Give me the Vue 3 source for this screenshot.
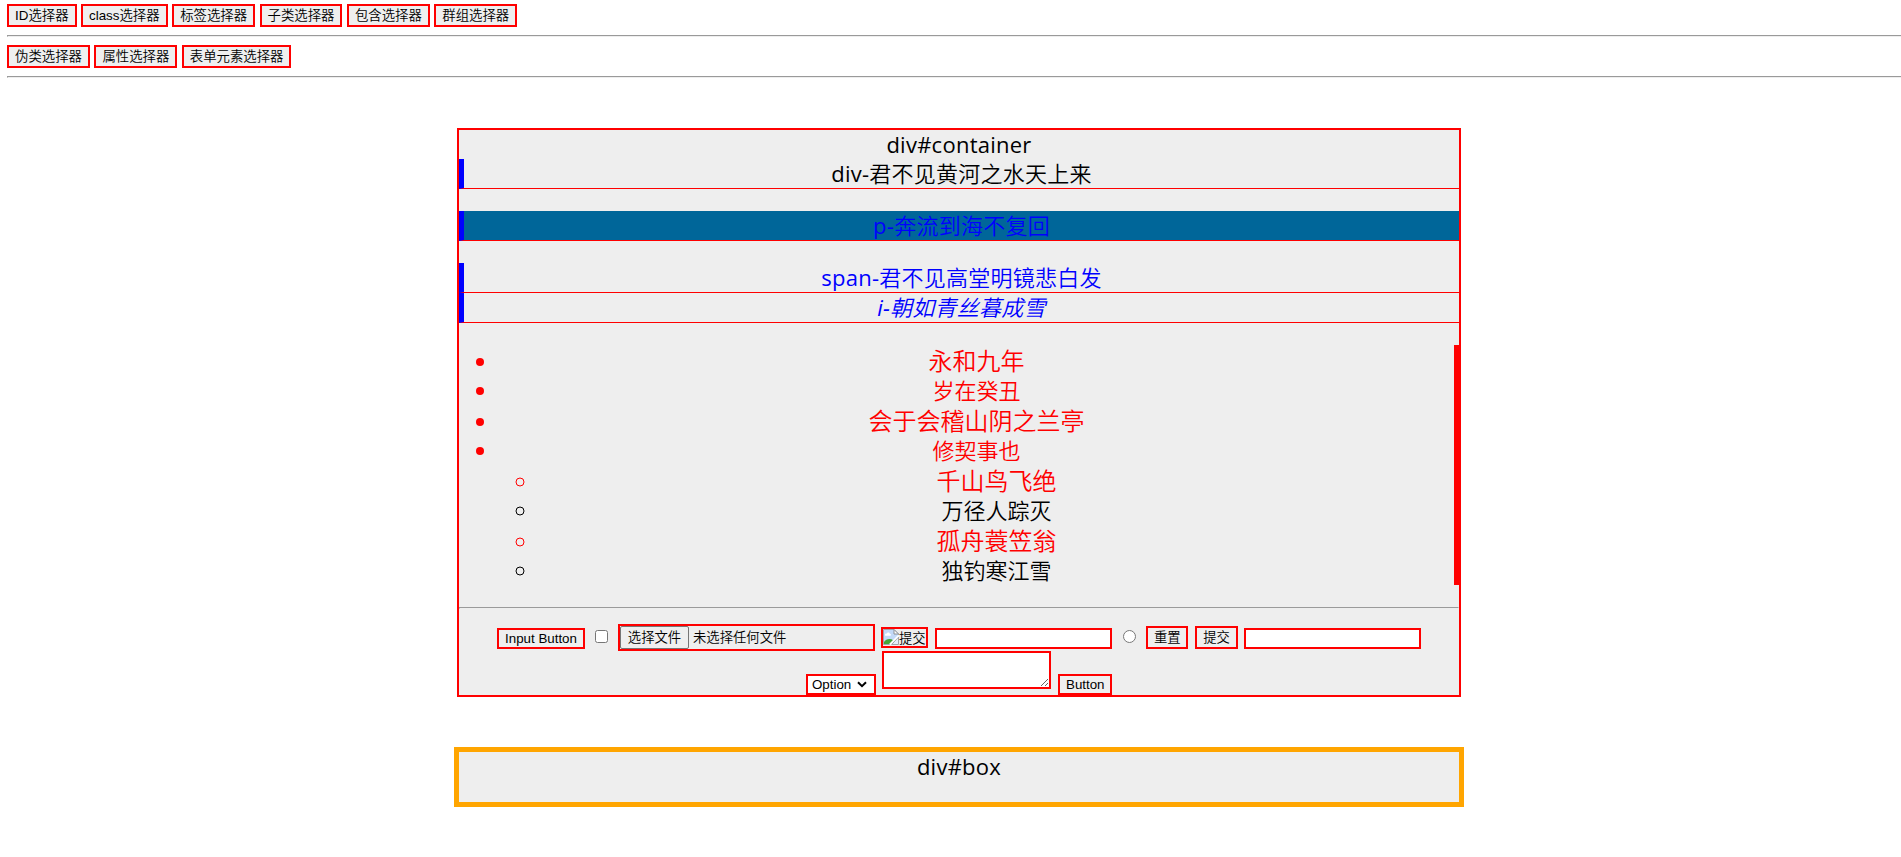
<script setup>
import { ref } from 'vue'

const basicButtons = ['ID选择器', 'class选择器', '标签选择器', '子类选择器', '包含选择器', '群组选择器']
const extraButtons = ['伪类选择器', '属性选择器', '表单元素选择器']

const outerItems = ['永和九年', '岁在癸丑', '会于会稽山阴之兰亭', '修契事也']
const innerItems = ['千山鸟飞绝', '万径人踪灭', '孤舟蓑笠翁', '独钓寒江雪']

const password = ref('')
const text = ref('')
const checked = ref(false)
const note = ref('')
</script>

<template>
  <div class="page">
    <div class="toolbar">
      <button v-for="label in basicButtons" :key="label" class="btn">{{ label }}</button>
    </div>
    <hr />
    <div class="toolbar">
      <button v-for="label in extraButtons" :key="label" class="btn">{{ label }}</button>
    </div>
    <hr />

    <div class="container">
      <div class="title">div#container</div>
      <div class="child">div-君不见黄河之水天上来</div>
      <p class="child blue filled">p-奔流到海不复回</p>
      <span class="child blue">span-君不见高堂明镜悲白发</span>
      <i class="child blue">i-朝如青丝暮成雪</i>

      <ul class="outer">
        <li v-for="item in outerItems" :key="item"><span>{{ item }}</span></li>
        <ul class="inner">
          <li v-for="item in innerItems" :key="item"><span>{{ item }}</span></li>
        </ul>
      </ul>

      <hr class="divider" />

      <form class="controls" @submit.prevent>
        <div class="row row-first">
          <input class="btn input-button" type="button" value="Input Button" />
          <input v-model="checked" class="check" type="checkbox" />
          <div class="file">
            <button class="file-button" type="button">选择文件</button>
            <span class="file-name">未选择任何文件</span>
          </div>
          <div class="image-input">
            <svg width="16" height="16" viewBox="0 0 16 16">
              <path d="M0.5 0.5H11L15.5 5V6.5L6.5 15.5H0.5Z" fill="#c3d9f8" stroke="#a0a4aa" />
              <path d="M2 6.2C2 4.6 3.2 4.4 3.7 4.7C4.2 3 6.6 3.2 6.8 4.8C8 4.7 8.4 6.2 7.4 6.7H2.4Z" fill="#fff" />
              <path d="M1 15V13C3 10 7 9 10.5 11.5L7 15Z" fill="#45a537" />
              <path d="M11 0.5V5H15.5Z" fill="#fff" stroke="#8c9096" />
              <path d="M15.5 8V15.5H8.7Z" fill="#e5effc" stroke="#a0a4aa" />
              <path d="M15.8 6.2L6.8 15.2" stroke="#fff" stroke-width="1.6" />
            </svg>
            <span>提交</span>
          </div>
          <input v-model="password" class="field field-password" type="password" />
          <input class="radio" type="radio" />
          <button class="btn reset" type="reset">重置</button>
          <button class="btn submit" type="submit">提交</button>
          <input v-model="text" class="field field-text" type="text" />
        </div>
        <div class="row row-second">
          <div class="select-wrap">
            <select class="select">
              <option>Option</option>
            </select>
            <svg class="arrow" width="10" height="7" viewBox="0 0 10 7">
              <path d="M1 1.2L5 5.2L9 1.2" fill="none" stroke="#000" stroke-width="2" />
            </svg>
          </div>
          <textarea v-model="note" class="area"></textarea>
          <button class="btn plain" type="button">Button</button>
        </div>
      </form>
    </div>

    <div class="box">div#box</div>
  </div>
</template>

<style>
body {
  margin: 0;
  background: #fff;
  overflow: hidden;
}
</style>

<style scoped>
.page {
  width: 1904px;
  padding: 4px 0 0 7px;
  color: #000;
  font-family: "Open Sans", "Noto Sans CJK SC DemiLight", "Noto Sans CJK SC", sans-serif;
}

.toolbar {
  display: flex;
  gap: 4.5px;
  height: 23px;
}

.toolbar .btn {
  font-size: 13.38px;
}

hr {
  margin: 8px 0;
  border: 1px solid;
  border-color: #9a9a9a #eee #eee #9a9a9a;
}

.btn {
  box-sizing: border-box;
  margin: 0;
  padding: 1px 6px;
  border: 2px solid red;
  border-radius: 0;
  background: #efefef;
  color: #000;
  font: 13.333px/17px "Liberation Sans", "Noto Sans CJK SC DemiLight", "Noto Sans CJK SC", sans-serif;
  white-space: nowrap;
}

.container,
.box {
  width: 1000px;
  margin: 50px auto;
  background: #eee;
  font-size: 22px;
  text-align: center;
}

.container {
  border: 2px solid red;
}

.title {
  height: 29px;
  line-height: 29px;
  letter-spacing: 0.25px;
}

.child {
  display: block;
  height: 29px;
  border-left: 5px solid blue;
  border-bottom: 1px solid red;
  line-height: 29px;
  letter-spacing: 0.25px;
}

.blue {
  color: blue;
}

.filled {
  margin: 22px 0;
  background: #069;
}

.outer {
  margin: 22px 0;
  padding-left: 40px;
  border-right: 5px solid red;
}

.inner {
  margin: 0;
  padding-left: 40px;
}

li {
  height: 29px;
  padding-top: 1px;
  line-height: 29px;
}

li::marker {
  font-size: 22px;
}

.outer > li,
.inner > li:nth-child(odd) {
  color: red;
}

li:nth-child(odd) {
  font-size: 24px;
  line-height: 30px;
}

.divider {
  margin: 0;
}

.controls {
  font: 13.333px/17px "Liberation Sans", "Noto Sans CJK SC DemiLight", "Noto Sans CJK SC", sans-serif;
}

.row {
  display: flex;
  align-items: flex-start;
}

.row-first {
  height: 27px;
  padding: 15px 0 0 38px;
}

.row-second {
  align-items: flex-end;
  height: 44px;
  padding-left: 347px;
}

.input-button {
  width: 88px;
  height: 21px;
  margin-top: 4px;
  line-height: 15px;
}

.check {
  width: 13px;
  height: 13px;
  margin: 6px 10px 0;
}

.file {
  box-sizing: border-box;
  display: flex;
  align-items: center;
  width: 257px;
  height: 27px;
  border: 2px solid red;
}

.file-button {
  box-sizing: border-box;
  width: 69px;
  height: 23px;
  margin: 0 4px 0 0;
  padding: 0;
  border: 1px solid #767676;
  border-radius: 2px;
  background: #efefef;
  color: #000;
  font: inherit;
}

.image-input {
  box-sizing: border-box;
  display: flex;
  width: 47px;
  height: 21px;
  margin: 3px 7px 0 6px;
  border: 2px solid red;
}

.image-input svg {
  flex: none;
}

.image-input span {
  padding-top: 1px;
}

.field {
  box-sizing: border-box;
  width: 177px;
  height: 21px;
  margin: 4px 0 0;
  padding: 1px 2px;
  border: 2px solid red;
  background: #fff;
}

.radio {
  width: 13px;
  height: 13px;
  margin: 6px 10px 0 11px;
}

.reset,
.submit {
  height: 23px;
  margin-top: 2px;
}

.reset {
  width: 42px;
}

.submit {
  width: 43px;
  margin-left: 7px;
}

.field-text {
  margin-left: 6px;
}

.select-wrap {
  position: relative;
  width: 70px;
  height: 21px;
}

.select {
  box-sizing: border-box;
  display: block;
  width: 70px;
  height: 21px;
  margin: 0;
  padding: 0 0 0 4px;
  border: 2px solid red;
  border-radius: 0;
  background-color: #fff;
  color: #000;
  font: 13.333px "Liberation Sans", sans-serif;
  appearance: none;
}

.arrow {
  position: absolute;
  top: 7px;
  right: 9px;
  pointer-events: none;
}

.area {
  box-sizing: border-box;
  width: 169px;
  height: 38px;
  margin: 0 7px 6px 6px;
  padding: 2px;
  border: 2px solid red;
  background: #fff;
  overflow: auto;
}

.plain {
  width: 54px;
  height: 21px;
  line-height: 15px;
}

.box {
  height: 50px;
  border: 5px solid orange;
  line-height: 29px;
  letter-spacing: 0.25px;
}
</style>
